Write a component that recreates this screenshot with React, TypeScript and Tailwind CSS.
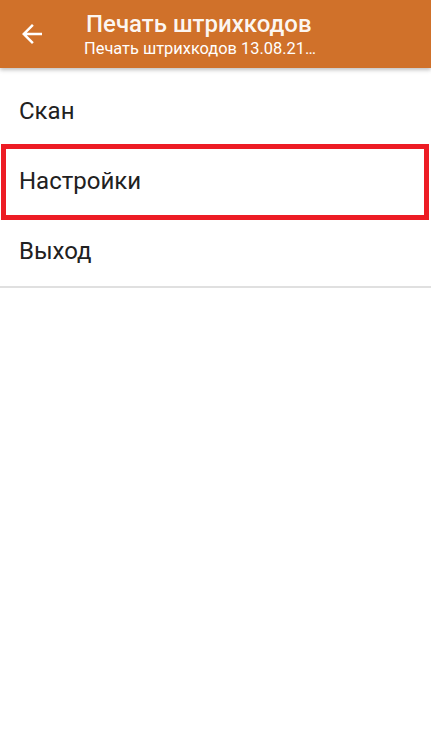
import React from "react";

export default function App() {
  return (
    <div
      className="relative w-[431px] h-[739px] bg-white overflow-hidden"
      style={{ fontFamily: "Roboto, 'Noto Sans', sans-serif" }}
    >
      <div className="relative z-10 h-[68px] bg-[#d0712a] flex items-center shadow-[0_2px_4px_rgba(0,0,0,0.25)]">
        <div className="w-[84px] flex items-center pl-[17px]">
          <svg width="30" height="30" viewBox="0 0 24 24" fill="none">
            <path d="M20 11H7.83l5.59-5.59L12 4l-8 8 8 8 1.41-1.41L7.83 13H20v-2z" fill="#ffffff" />
          </svg>
        </div>
        <div className="flex flex-col leading-none pt-[2px]">
          <div className="text-[24px] font-medium text-white/95 leading-[28px] ml-[2px]">Печать штрихкодов</div>
          <div className="text-[16.4px] text-white leading-[22px]">Печать штрихкодов 13.08.21…</div>
        </div>
      </div>
      <div className="pt-[8px]">
        <div className="h-[70px] flex items-center pl-[19px] text-[24px] text-[#212121]">Скан</div>
        <div className="h-[70px] flex items-center pl-[19px] text-[24px] text-[#212121]">Настройки</div>
        <div className="h-[70px] flex items-center pl-[19px] text-[24px] text-[#212121]">Выход</div>
        <div className="h-[2px] bg-[#e0e0e0]" />
      </div>
      <div className="absolute left-[1px] top-[144px] w-[428px] h-[76px] border-[5px] border-[#ed1c24]" />
    </div>
  );
}
